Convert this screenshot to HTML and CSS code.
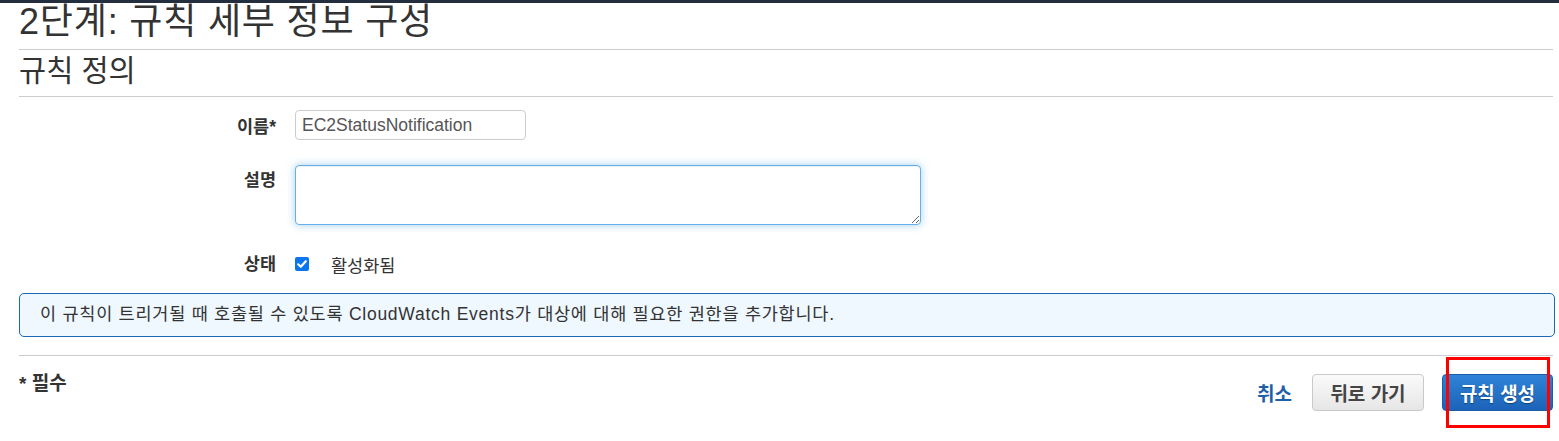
FILE: index.html
```html
<!DOCTYPE html>
<html lang="ko">
<head>
<meta charset="utf-8">
<link rel="stylesheet" href="styles.css">
</head>
<body>
<div class="topbar"></div>
<main class="page">
  <h1 class="title">2단계: 규칙 세부 정보 구성</h1>
  <h2 class="section">규칙 정의</h2>
  <div class="form">
    <div class="row row-name">
      <label class="label">이름*</label>
      <input class="input" type="text" value="EC2StatusNotification">
    </div>
    <div class="row row-desc">
      <label class="label">설명</label>
      <textarea class="textarea"></textarea>
    </div>
    <div class="row row-state">
      <label class="label">상태</label>
      <div class="check">
        <span class="checkbox"><svg viewBox="0 0 14 14" width="14" height="14"><path d="M3.2 7.3 L5.8 9.8 L10.8 4.2" fill="none" stroke="#fff" stroke-width="2.2" stroke-linecap="round" stroke-linejoin="round"/></svg></span>
        <span class="check-text">활성화됨</span>
      </div>
    </div>
  </div>
  <div class="info">이 규칙이 트리거될 때 호출될 수 있도록 CloudWatch Events가 대상에 대해 필요한 권한을 추가합니다.</div>
  <div class="footer">
    <div class="required">* 필수</div>
    <div class="actions">
      <a class="cancel">취소</a>
      <button class="btn btn-back">뒤로 가기</button>
      <span class="primary-wrap">
        <button class="btn btn-primary">규칙 생성</button>
        <span class="highlight"></span>
      </span>
    </div>
  </div>
</main>
</body>
</html>
```
FILE: styles.css
```css
* { box-sizing: border-box; }
html, body { margin: 0; padding: 0; background: #fff; }
body {
  font-family: "Liberation Sans", Arial, "Noto Sans CJK KR", sans-serif;
  color: #333;
  font-size: 17.5px;
}
.topbar { height: 3px; background: #232f3e; }
.page { padding: 0 4px 30px 19px; }
.title {
  margin: 0 2px 0 0;
  font-size: 36px;
  font-weight: 400;
  line-height: 38px;
  height: 47px;
  color: #333;
  border-bottom: 1px solid #ccc;
  letter-spacing: 0.8px;
}
.section {
  margin: 0 2px 0 0;
  font-size: 29.5px;
  font-weight: 400;
  line-height: 42px;
  height: 47px;
  color: #333;
  border-bottom: 1px solid #ccc;
}
.form { padding-top: 13px; }
.row {
  display: grid;
  grid-template-columns: 257px 1fr;
  column-gap: 19px;
  align-items: start;
}
.label {
  text-align: right;
  font-weight: 700;
  font-size: 17.5px;
  color: #333;
}
.row-name { height: 55px; }
.row-name .label { padding-top: 3px; }
.input {
  width: 231px;
  height: 30px;
  border: 1px solid #ccc;
  border-radius: 4px;
  padding: 0 6px;
  font-family: "Liberation Sans", Arial, sans-serif;
  font-size: 17.5px;
  color: #555;
  outline: none;
}
.row-desc { height: 78px; }
.row-desc .label { padding-top: 1px; }
.textarea {
  width: 626px;
  height: 60px;
  border: 1px solid #66afe9;
  border-radius: 4px;
  box-shadow: inset 0 1px 1px rgba(0,0,0,.075), 0 0 8px rgba(102,175,233,.6);
  outline: none;
  resize: vertical;
  font-family: inherit;
}
.row-state { height: 50px; padding-top: 9px; }
.row-state .label { line-height: 24px; }
.check { display: flex; align-items: center; gap: 22px; height: 24px; }
.checkbox {
  width: 14px;
  height: 14px;
  border-radius: 2px;
  background: #0b75ef;
  display: flex;
}
.check-text { font-size: 17.5px; color: #333; }
.info {
  height: 44px;
  border: 1px solid #1d67b5;
  border-radius: 5px;
  background: #eff7ff;
  padding: 0 20px;
  line-height: 41px;
  font-size: 17.5px;
  letter-spacing: 0.75px;
  color: #333;
}
.footer {
  margin-top: 18px;
  margin-right: 2px;
  border-top: 1px solid #ccc;
  display: flex;
  justify-content: space-between;
  align-items: flex-start;
}
.required {
  padding-top: 17px;
  line-height: 22px;
  font-weight: 700;
  font-size: 19px;
  color: #333;
}
.actions {
  display: flex;
  align-items: center;
  padding-top: 18px;
}
.cancel {
  font-weight: 700;
  color: #1e5fa8;
  font-size: 19px;
  margin-right: 20px;
}
.btn {
  height: 37px;
  border-radius: 4px;
  font-family: inherit;
  font-size: 19px;
  font-weight: 700;
  padding: 0;
}
.btn-back {
  width: 112px;
  margin-right: 18px;
  color: #444;
  border: 1px solid #c9c9c9;
  background: linear-gradient(#fafafa, #e6e6e6);
}
.primary-wrap { position: relative; display: flex; }
.btn-primary {
  width: 111px;
  color: #fff;
  border: 1px solid #1a5ea8;
  background: linear-gradient(#2f83d8, #1b63b8);
  text-shadow: 0 1px 1px rgba(0,0,0,.4);
}
.highlight {
  position: absolute;
  left: 4px;
  top: -17px;
  width: 104px;
  height: 71px;
  border: 3px solid #f00;
  pointer-events: none;
}
```
